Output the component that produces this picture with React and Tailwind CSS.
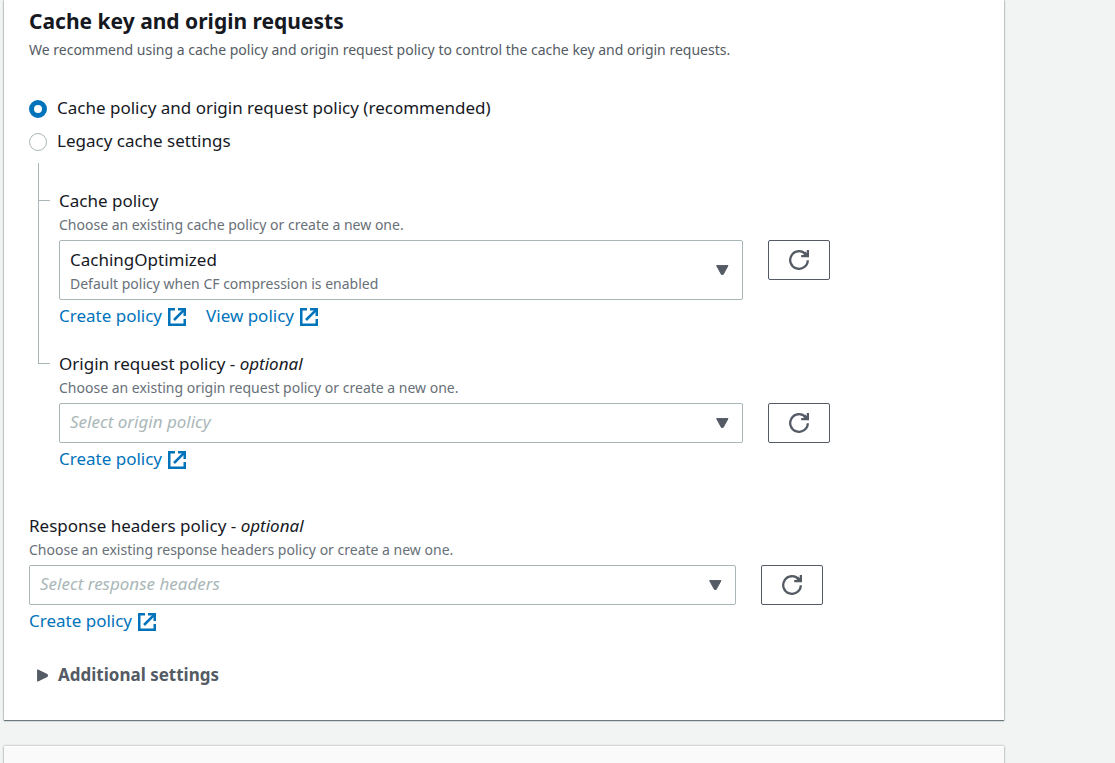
import { useState } from "react";

function ExternalIcon() {
  return (
    <svg viewBox="0 0 18 18" className="mt-px size-[18px] shrink-0" fill="none" stroke="currentColor" strokeWidth="2.5" aria-hidden="true">
      <path d="M7 1.25H1.25v15.5h15.5V11" />
      <path d="M10 1.25h6.75V8" />
      <path d="M16.4 1.6 6 12" />
    </svg>
  );
}

function RefreshIcon() {
  return (
    <svg viewBox="0 0 20 20" className="size-5" fill="none" stroke="currentColor" strokeWidth="2.3" aria-hidden="true">
      <path d="M18.8 10.2A8.8 8.8 0 1 1 16.6 4.2" />
      <path d="M18.9 0v6.1H12.2" />
      <path d="M15.2 2.6 18.6 6" strokeWidth="3" />
    </svg>
  );
}

function ExternalLink({ children }) {
  return (
    <a href="#policy" className="flex items-center gap-[6px] text-[17px] leading-6 text-[#0073bb] hover:underline">
      {children}
      <ExternalIcon />
    </a>
  );
}

function PolicyField({ id, label, optional, hint, value, description, children }) {
  return (
    <div className="min-w-0 flex-1">
      <label htmlFor={id} className="block text-[17px] leading-6 text-[#16191f]">
        {label}
        {optional && <> - <i>optional</i></>}
      </label>
      <p id={`${id}-hint`} className="mb-[3px] text-[14px] leading-6 text-[#687078]">{hint}</p>
      <div className="flex items-start gap-[25px]">
        <div className="relative min-w-0 flex-1">
          <select
            id={id}
            aria-describedby={`${id}-hint`}
            className={
              description
                ? "block h-[60px] w-full appearance-none rounded-xs border border-[#aab7b8] bg-white pr-10 pb-[21px] pl-[10px] text-[17px] text-[#16191f]"
                : "block h-10 w-full appearance-none rounded-xs border border-[#aab7b8] bg-white pr-10 pb-[2px] pl-[10px] text-[17px] text-[#aab7b8] italic"
            }
          >
            <option>{value}</option>
          </select>
          {description && (
            <span className="pointer-events-none absolute bottom-1 left-[11px] text-[14px] leading-6 text-[#687078]">{description}</span>
          )}
          <span className="pointer-events-none absolute inset-y-0 right-[14px] flex items-center text-[#545b64]">
            <svg viewBox="0 0 13 10" className="h-[10px] w-[13px]" fill="currentColor" stroke="currentColor" strokeLinejoin="round" aria-hidden="true">
              <path d="M.6.6h11.4L7.2 9.4H5.4z" />
            </svg>
          </span>
        </div>
        <button type="button" aria-label={`Refresh ${label}`} className="flex h-10 w-[62px] items-center justify-center rounded-xs border border-[#545b64] bg-white text-[#545b64]">
          <RefreshIcon />
        </button>
      </div>
      <div className="mt-1 flex gap-5">{children}</div>
    </div>
  );
}

function Choice({ value, current, onChange, children }) {
  return (
    <label className="flex items-center gap-[10px] text-[17px] leading-6 text-[#16191f]">
      <input
        type="radio"
        name="cache-mode"
        checked={current === value}
        onChange={() => onChange(value)}
        className="mt-px size-[18px] appearance-none rounded-full border border-[#aab7b8] bg-white checked:border-5 checked:border-[#0073bb]"
      />
      {children}
    </label>
  );
}

export default function App() {
  const [mode, setMode] = useState("policy");
  return (
    <main className="min-h-screen overflow-hidden bg-[#f2f3f3] pr-[111px] pl-1 font-['Noto_Sans',sans-serif]">
      <section className="bg-white px-[25px] pt-[5px] pb-[33px] shadow-[0_1px_1px_0_rgba(0,28,36,0.5),0_0_2px_0_rgba(0,28,36,0.4)]">
        <h2 className="mb-px text-[21px] leading-8 font-bold text-[#16191f]">Cache key and origin requests</h2>
        <p className="text-[14px] leading-6 text-[#545b64]">
          We recommend using a cache policy and origin request policy to control the cache key and origin requests.
        </p>
        <div className="mt-[34px] flex flex-col items-start gap-[9px]">
          <Choice value="policy" current={mode} onChange={setMode}>Cache policy and origin request policy (recommended)</Choice>
          <Choice value="legacy" current={mode} onChange={setMode}>Legacy cache settings</Choice>
        </div>

        <div className="mt-[10px] max-w-[801px] pl-[9px]">
          <div className="flex gap-[9px]">
            <div className="flex w-3 flex-col" aria-hidden="true">
              <div className="h-[38px] border-b border-l border-[#aab7b8]" />
              <div className="flex-1 border-l border-[#aab7b8]" />
            </div>
            <div className="flex min-w-0 flex-1 pt-[26px]">
              <PolicyField
                id="cache-policy"
                label="Cache policy"
                hint="Choose an existing cache policy or create a new one."
                value="CachingOptimized"
                description="Default policy when CF compression is enabled"
              >
                <ExternalLink>Create policy</ExternalLink>
                <ExternalLink>View policy</ExternalLink>
              </PolicyField>
            </div>
          </div>
          <div className="flex gap-[9px]">
            <div className="w-3" aria-hidden="true">
              <div className="h-9 border-b border-l border-[#aab7b8]" />
            </div>
            <div className="flex min-w-0 flex-1 pt-6">
              <PolicyField
                id="origin-policy"
                label="Origin request policy"
                optional
                hint="Choose an existing origin request policy or create a new one."
                value="Select origin policy"
              >
                <ExternalLink>Create policy</ExternalLink>
              </PolicyField>
            </div>
          </div>
        </div>

        <div className="mt-[43px] flex max-w-[794px]">
          <PolicyField
            id="response-policy"
            label="Response headers policy"
            optional
            hint="Choose an existing response headers policy or create a new one."
            value="Select response headers"
          >
            <ExternalLink>Create policy</ExternalLink>
          </PolicyField>
        </div>

        <button type="button" aria-expanded="false" className="mt-[30px] ml-2 flex items-center gap-[10px] text-[17px] leading-6 font-bold text-[#545b64]">
          <svg viewBox="0 0 11 13" className="h-[13px] w-[11px]" fill="currentColor" stroke="currentColor" strokeLinejoin="round" aria-hidden="true">
            <path d="M.6.8v11.4l9.8-4.8V5.6z" />
          </svg>
          Additional settings
        </button>
      </section>
      <section aria-label="Next settings" className="mt-[26px] h-10 border-t border-white bg-[#fafafa] shadow-[0_1px_1px_0_rgba(0,28,36,0.3),0_0_2px_0_rgba(0,28,36,0.4)]" />
    </main>
  );
}
